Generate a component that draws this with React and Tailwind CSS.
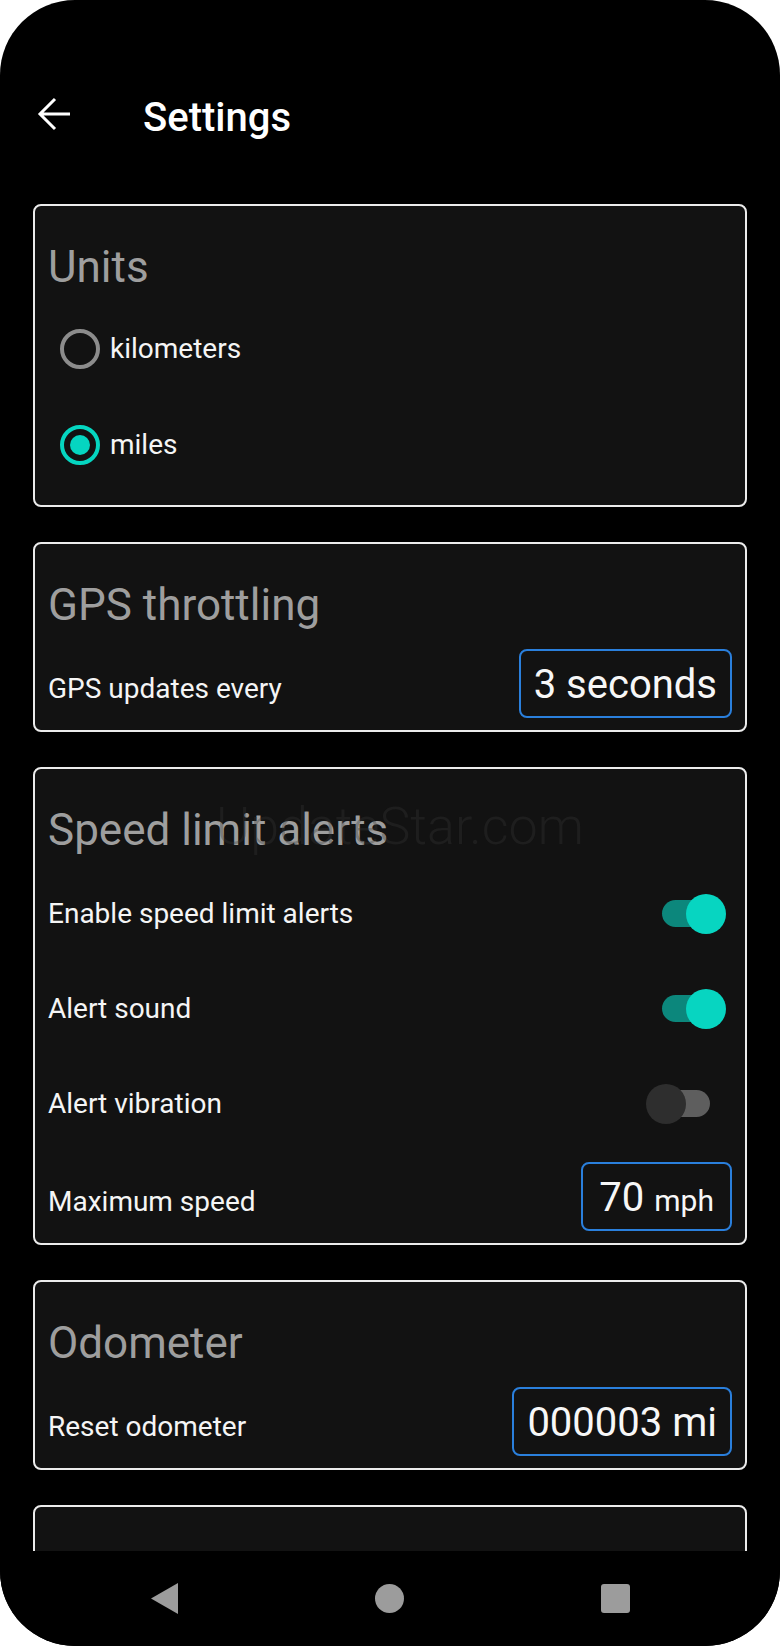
import React from 'react';

const Card = ({ title, children }) => (
  <div className="rounded-lg border-2 border-[#ececec] bg-[#121212] px-[13px] pt-[33px] pb-[12px] shrink-0">
    <div className="h-[56px] text-[44px] leading-[56px] text-[#9e9e9e]">{title}</div>
    {children}
  </div>
);

const Radio = ({ label, checked }) => (
  <div className="flex h-[96px] items-center gap-[10px] pl-[12px]">
    <div
      className={
        checked
          ? 'flex h-[40px] w-[40px] items-center justify-center rounded-full border-[4px] border-[#05d6c1]'
          : 'flex h-[40px] w-[40px] items-center justify-center rounded-full border-[4px] border-[#8c8c8c]'
      }
    >
      {checked && <div className="h-[20px] w-[20px] rounded-full bg-[#05d6c1]" />}
    </div>
    <span className="text-[28px] text-[#f5f5f5]">{label}</span>
  </div>
);

const Toggle = ({ on }) => (
  <div className="relative mr-[6px] h-[40px] w-[80px] shrink-0">
    <div
      className={
        on
          ? 'absolute left-[16px] top-[6.5px] h-[27px] w-[48px] rounded-full bg-[#0c877c]'
          : 'absolute left-[16px] top-[6.5px] h-[27px] w-[48px] rounded-full bg-[#5e5e5e]'
      }
    />
    <div
      className={
        on
          ? 'absolute right-0 top-0 h-[40px] w-[40px] rounded-full bg-[#07d5c1]'
          : 'absolute left-0 top-0 h-[40px] w-[40px] rounded-full bg-[#2e2e2e]'
      }
    />
  </div>
);

const SwitchRow = ({ label, on }) => (
  <div className="flex h-[95px] items-center justify-between">
    <span className="text-[28px] leading-[42px] text-[#f5f5f5]">{label}</span>
    <Toggle on={on} />
  </div>
);

const ValueBox = ({ children, className = 'px-[13px]' }) => (
  <div className={`flex h-[69px] items-baseline rounded-lg border-2 border-[#2a7fdc] pt-[10px] text-[#f7f7f7] ${className}`}>
    {children}
  </div>
);

export default function App() {
  return (
    <div className="min-h-screen bg-white font-['Roboto',sans-serif]">
      <div className="relative flex h-[1646px] w-[780px] flex-col overflow-hidden rounded-[75px] bg-black">
        <div className="flex min-h-0 flex-1 flex-col overflow-hidden">
          {/* top bar */}
          <div className="flex h-[204px] shrink-0 items-start pt-[94px]">
            <svg className="ml-[35px] shrink-0" width="40" height="40" viewBox="0 0 40 40" fill="none">
              <path d="M35 20H6M20 5L5 20L20 35" stroke="#ffffff" strokeWidth="3" />
            </svg>
            <h1 className="ml-[68px] text-[40px] font-medium leading-[48px] text-white">Settings</h1>
          </div>

          <div className="flex flex-col gap-[35px] px-[33px]">
            <Card title="Units">
              <div className="mt-[6px]">
                <Radio label="kilometers" />
                <Radio label="miles" checked />
              </div>
            </Card>

            <Card title="GPS throttling">
              <div className="mt-[16px] flex items-baseline justify-between">
                <span className="text-[28px] text-[#f5f5f5]">GPS updates every</span>
                <ValueBox>
                  <span className="text-[40px] leading-[48px]">3 seconds</span>
                </ValueBox>
              </div>
            </Card>

            <Card title="Speed limit alerts">
              <div className="mt-[8px]">
                <SwitchRow label="Enable speed limit alerts" on />
                <SwitchRow label="Alert sound" on />
                <SwitchRow label="Alert vibration" />
              </div>
              <div className="mt-[11px] flex items-baseline justify-between">
                <span className="text-[28px] text-[#f5f5f5]">Maximum speed</span>
                <ValueBox className="px-[16px]">
                  <span className="text-[40px] leading-[48px]">70</span>
                  <span className="ml-[10px] text-[30px]">mph</span>
                </ValueBox>
              </div>
            </Card>

            <Card title="Odometer">
              <div className="mt-[16px] flex items-baseline justify-between">
                <span className="text-[28px] text-[#f5f5f5]">Reset odometer</span>
                <ValueBox>
                  <span className="text-[40px] leading-[48px]">000003 mi</span>
                </ValueBox>
              </div>
            </Card>

            <div className="h-[190px] shrink-0 rounded-lg border-2 border-[#ececec] bg-[#121212]" />
          </div>
        </div>

        {/* system nav bar */}
        <div className="flex h-[95px] shrink-0 items-center justify-center gap-[197px] bg-black">
          <svg width="27" height="31" viewBox="0 0 27 31">
            <path d="M27 0V31L0 15.5Z" fill="#9c9c9c" />
          </svg>
          <div className="h-[29px] w-[29px] rounded-full bg-[#9c9c9c]" />
          <div className="h-[29px] w-[29px] rounded-[3px] bg-[#9c9c9c]" />
        </div>

        {/* watermark */}
        <div className="pointer-events-none absolute left-[216px] top-[801px] text-[52px] font-light leading-none text-[rgba(55,55,55,0.33)]">
          UpdateStar.com
        </div>
      </div>
    </div>
  );
}
